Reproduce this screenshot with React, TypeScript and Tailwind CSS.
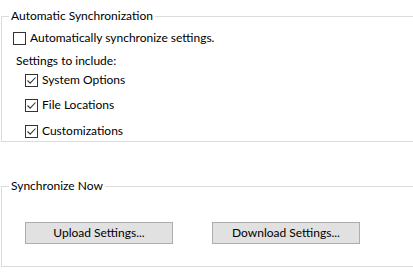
function CheckBox({ checked }: { checked: boolean }) {
  return (
    <span className="flex h-[13px] w-[13px] shrink-0 items-center justify-center border border-[#333333] bg-white">
      {checked && (
        <svg width="11" height="11" viewBox="0 0 11 11" fill="none">
          <path d="M1.5 5.5 L4.2 8.2 L9.5 2.5" stroke="#333333" strokeWidth="1.1" />
        </svg>
      )}
    </span>
  );
}

function Row({ label, checked, className }: { label: string; checked: boolean; className?: string }) {
  return (
    <label className={"flex items-center gap-[4px] " + (className ?? "")}>
      <CheckBox checked={checked} />
      <span>{label}</span>
    </label>
  );
}

function App() {
  return (
    <div className="h-[273px] w-[413px] overflow-hidden bg-white font-['Lato',sans-serif] text-[12px] leading-[16px] text-black">
      {/* Automatic Synchronization group */}
      <fieldset className="mt-[8px] ml-[1px] w-[440px] border border-[#dcdcdc] p-0">
        <legend className="ml-[7px] px-[2px]">Automatic Synchronization</legend>
        <div className="pl-[11px] pb-[2px]">
          <Row className="mt-[6px]" label="Automatically synchronize settings." checked={false} />
          <div className="mt-[7px] ml-[3px]">Settings to include:</div>
          <div className="ml-[12px] flex flex-col">
            <Row className="mt-[3px]" label="System Options" checked />
            <Row className="mt-[9px]" label="File Locations" checked />
            <Row className="mt-[10px]" label="Customizations" checked />
          </div>
        </div>
      </fieldset>

      {/* Synchronize Now group */}
      <fieldset className="mt-[36px] ml-[1px] h-[89px] w-[440px] border border-[#dcdcdc] p-0">
        <legend className="ml-[7px] px-[2px]">Synchronize Now</legend>
        <div className="mt-[28px] flex gap-[39px] pl-[23px]">
          <button className="h-[22px] w-[148px] border border-[#adadad] bg-[#e1e1e1]">Upload Settings...</button>
          <button className="h-[22px] w-[148px] border border-[#adadad] bg-[#e1e1e1]">Download Settings...</button>
        </div>
      </fieldset>
    </div>
  );
}

export default App;
